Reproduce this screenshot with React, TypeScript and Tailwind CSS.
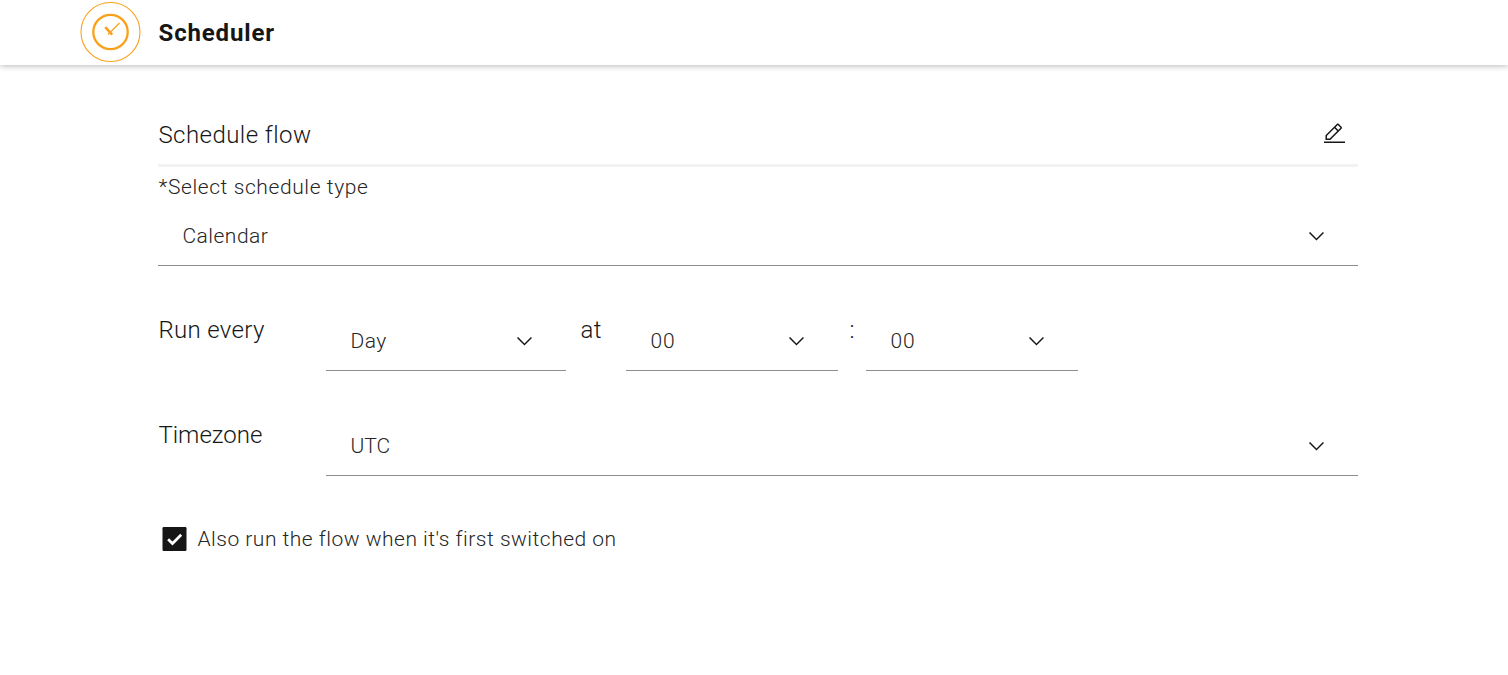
function Chevron() {
  return (
    <svg viewBox="-0.33 0 16 16" className="h-6 w-6 shrink-0" fill="#161616">
      <path d="M8 11L3 6 3.7 5.3 8 9.6 12.3 5.3 13 6z" />
    </svg>
  );
}

function Select({ value, width, spacing }: { value: string; width: string; spacing: string }) {
  return (
    <button
      className={`flex h-[60px] items-center justify-between border-b border-[#8d8d8d] pr-[30px] pl-6 text-[21px] leading-8 font-light text-[#262626] ${width} ${spacing}`}
    >
      <span>{value}</span>
      <Chevron />
    </button>
  );
}

function Logo() {
  return (
    <svg viewBox="0 0 62 62" className="h-[62px] w-[62px]" fill="none" stroke="#f9a11b">
      <circle cx="30.5" cy="31" r="29.5" strokeWidth="1.1" />
      <circle cx="30.5" cy="31" r="17.2" strokeWidth="2.3" />
      <path d="M39.5 22L28 33.5" strokeWidth="1.2" />
      <path d="M25.2 26.2L32.2 33.6" strokeWidth="2.6" />
    </svg>
  );
}

export default function App() {
  return (
    <div className="h-[675px] overflow-hidden bg-white font-['Roboto','Liberation_Sans',sans-serif] text-[#161616]">
      <header className="flex h-[65px] items-start bg-white pt-[1px] pl-20 shadow-[0_1px_6px_rgba(0,0,0,0.28)]">
        <Logo />
        <h1 className="mt-4 ml-[16.5px] text-2xl font-bold tracking-[0.85px]">Scheduler</h1>
      </header>
      <main className="ml-[158.4px] w-[1200px] pt-[45px]">
        <div className="flex h-[57px] items-start justify-between border-b-[3px] border-[#f4f1f1] pt-[9px] pr-3">
          <h2 className="text-2xl font-[350] tracking-[0.45px]">Schedule flow</h2>
          <svg viewBox="-0.67 0 32 32" className="mt-[3px] h-6 w-6" fill="#161616">
            <path d="M2 26H30V28H2zM25.4 9c.8-.8.8-2 0-2.8l-3.6-3.6c-.8-.8-2-.8-2.8 0l-15 15V24h6.4L25.4 9zM20.4 4L24 7.6l-3 3L17.4 7 20.4 4zM6 22v-3.6l10-10 3.6 3.6-10 10H6z" />
          </svg>
        </div>
        <label className="block h-[39px] pt-1 text-[21px] leading-[32px] font-light tracking-[0.6px] text-[#262626]">*Select schedule type</label>
        <Select value="Calendar" width="w-full" spacing="tracking-[0.5px]" />
        <div className="mt-[45px] flex h-[60px] text-2xl font-[350]">
          <span className="w-[168px] pt-[3px] tracking-[0.35px]">Run every</span>
          <Select value="Day" width="w-[240px]" spacing="tracking-[0.5px]" />
          <span className="w-[60px] pt-[3px] pl-[14px] tracking-[0.5px]">at</span>
          <Select value="00" width="w-[212px]" spacing="tracking-[0.9px]" />
          <span className="w-7 pt-[3px] pl-[11px]">:</span>
          <Select value="00" width="w-[212px]" spacing="tracking-[0.9px]" />
        </div>
        <div className="mt-[45px] flex h-[60px] text-2xl font-[350]">
          <span className="w-[168px] pt-[3px] tracking-[0px]">Timezone</span>
          <Select value="UTC" width="w-[1032px]" spacing="tracking-[0px]" />
        </div>
        <label className="mt-[51px] flex h-6 items-center pl-1 text-[21px] leading-8 font-light text-[#262626]">
          <svg viewBox="0 0 25 24" className="mr-2.5 h-6 w-[25px]">
            <rect x="0.5" width="24" height="24" rx="1.2" fill="#161616" />
            <path d="M6.1 12.2L10.5 16.5L19.2 7.8" fill="none" stroke="#fff" strokeWidth="2.7" />
          </svg>
          <span className="tracking-[0.5px]">Also run the flow when it's first switched on</span>
        </label>
      </main>
    </div>
  );
}
